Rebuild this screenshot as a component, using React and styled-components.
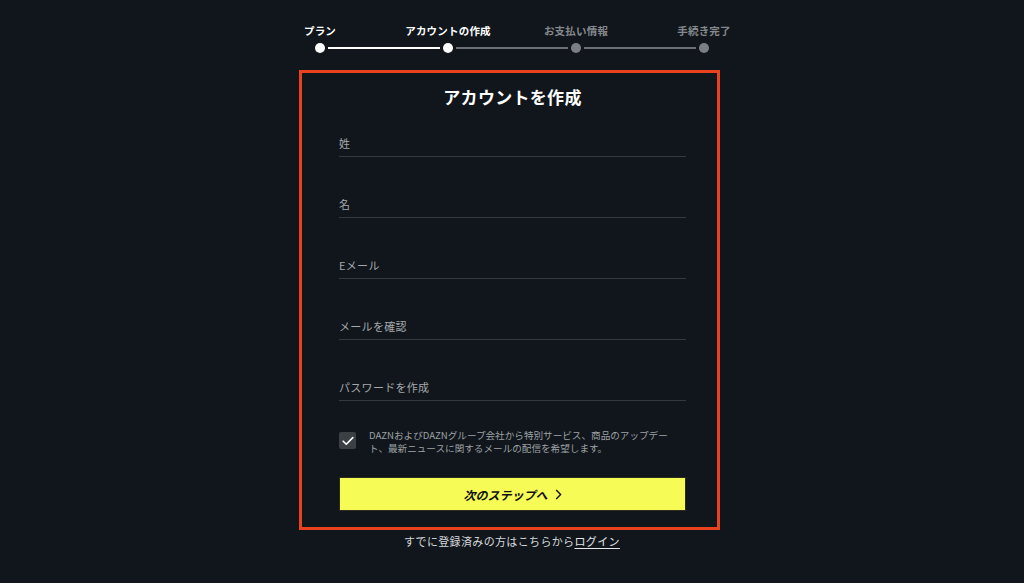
import styled, { createGlobalStyle } from 'styled-components';

const GlobalStyle = createGlobalStyle`
  html, body {
    margin: 0;
    padding: 0;
    background: #10161b;
  }
  body {
    font-family: "Noto Sans CJK JP", "Noto Sans", sans-serif;
    color: #fff;
  }
`;

const Page = styled.div`
  display: flex;
  flex-direction: column;
  align-items: center;
  padding-top: 22px;
`;

const Stepper = styled.div`
  display: flex;
  flex-direction: column;
  align-items: center;
`;

const Labels = styled.div`
  display: grid;
  grid-template-columns: repeat(4, 128px);
`;

const StepLabel = styled.span`
  text-align: center;
  font-size: 10.5px;
  font-weight: 700;
  letter-spacing: 0.2px;
  line-height: 18px;
  color: ${(p) => (p.$active ? '#fff' : '#85898d')};
`;

const Track = styled.div`
  display: flex;
  align-items: center;
  width: 394px;
  height: 10px;
  margin-top: 3px;
`;

const Dot = styled.span`
  width: 10px;
  height: 10px;
  border-radius: 50%;
  flex: none;
  background: ${(p) => (p.$active ? '#fff' : '#7b7f83')};
`;

const Line = styled.span`
  flex: 1;
  height: 2px;
  margin: 0 3px;
  background: ${(p) => (p.$active ? '#fff' : '#6a6e72')};
`;

const Card = styled.div`
  box-sizing: border-box;
  width: 421px;
  margin: 17px 5px 0 0;
  border: 3px solid #e8421f;
  padding: 11px 31px 16px 37px;
  display: flex;
  flex-direction: column;
`;

const Title = styled.h1`
  margin: 0 0 26px;
  text-align: center;
  font-size: 17px;
  font-weight: 700;
  line-height: 26px;
  letter-spacing: 0.3px;
`;

const Field = styled.div`
  margin-bottom: 40px;
  border-bottom: 1px solid #34393e;
  padding-bottom: 4px;
`;

const FieldLabel = styled.label`
  display: block;
  font-size: 11px;
  line-height: 16px;
  letter-spacing: 0.3px;
  color: #a4a8ac;
  transform: translateY(-1px);
`;

const ConsentRow = styled.div`
  display: flex;
  align-items: flex-start;
  gap: 13px;
  margin-top: -12px;
`;

const CheckBox = styled.span`
  flex: none;
  width: 17px;
  height: 17px;
  margin-top: 3px;
  background: #3b4045;
  border-radius: 2px;
  display: flex;
  align-items: center;
  justify-content: center;
`;

const ConsentText = styled.p`
  margin: 0;
  font-size: 9.6px;
  line-height: 13px;
  letter-spacing: 0;
  white-space: nowrap;
  color: #9ea2a6;
`;

const NextButton = styled.button`
  margin-top: 22px;
  height: 34px;
  border: 1px solid #2a2d1a;
  background: #f7fb55;
  color: #111;
  font-family: inherit;
  font-size: 12px;
  font-weight: 700;
  font-style: italic;
  display: flex;
  align-items: center;
  justify-content: center;
  gap: 7px;
  cursor: pointer;
`;

const Footer = styled.p`
  margin: 3px 0 0;
  font-size: 11px;
  line-height: 16px;
  letter-spacing: 0.35px;
  color: #d4d7da;
`;

const LoginLink = styled.a`
  color: #e4e6e8;
  text-decoration: underline;
  text-underline-offset: 2px;
`;

const steps = [
  { label: 'プラン', active: true },
  { label: 'アカウントの作成', active: true },
  { label: 'お支払い情報', active: false },
  { label: '手続き完了', active: false },
];

const fields = ['姓', '名', 'Eメール', 'メールを確認', 'パスワードを作成'];

export default function App() {
  return (
    <>
      <GlobalStyle />
      <Page>
        <Stepper>
          <Labels>
            {steps.map((s) => (
              <StepLabel key={s.label} $active={s.active}>{s.label}</StepLabel>
            ))}
          </Labels>
          <Track>
            <Dot $active />
            <Line $active />
            <Dot $active />
            <Line />
            <Dot />
            <Line />
            <Dot />
          </Track>
        </Stepper>

        <Card>
          <Title>アカウントを作成</Title>
          {fields.map((f) => (
            <Field key={f}>
              <FieldLabel>{f}</FieldLabel>
            </Field>
          ))}
          <ConsentRow>
            <CheckBox>
              <svg width="12" height="10" viewBox="0 0 12 10" fill="none">
                <path d="M1.2 5.2 4.3 8.2 10.8 1.6" stroke="#fff" strokeWidth="1.6" strokeLinecap="round" strokeLinejoin="round" />
              </svg>
            </CheckBox>
            <ConsentText>
              {'DAZNおよびDAZNグループ会社から特別サービス、商品のアップデー'}
              <br />
              {'ト、最新ニュースに関するメールの配信を希望します。'}
            </ConsentText>
          </ConsentRow>
          <NextButton type="button">
            次のステップへ
            <svg width="7" height="11" viewBox="0 0 7 11" fill="none">
              <path d="M1.2 1 5.6 5.5 1.2 10" stroke="#111" strokeWidth="1.4" />
            </svg>
          </NextButton>
        </Card>

        <Footer>
          すでに登録済みの方はこちらから<LoginLink>ログイン</LoginLink>
        </Footer>
      </Page>
    </>
  );
}
